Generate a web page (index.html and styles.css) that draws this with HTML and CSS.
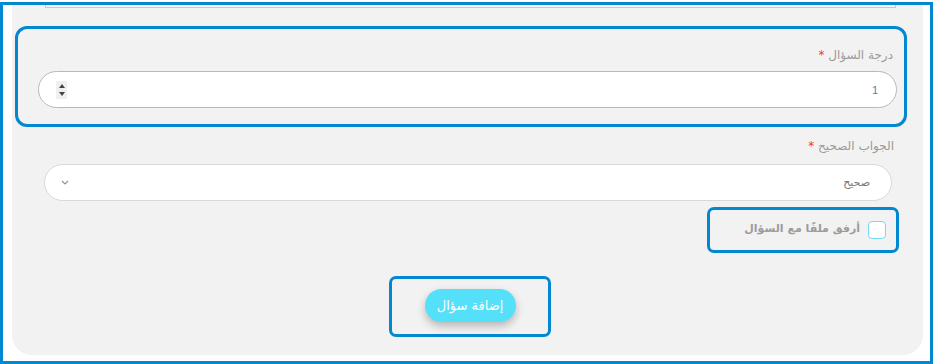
FILE: index.html
```html
<!DOCTYPE html>
<html lang="ar" dir="rtl">
<head>
    <meta charset="UTF-8">
    <meta name="viewport" content="width=device-width, initial-scale=1.0">
    <title>إضافة سؤال</title>
    <link rel="stylesheet" href="styles.css">
</head>
<body>
    <div class="frame">
        <div class="panel">
            <!-- bottom of the question textarea -->
            <div class="textarea-end"></div>

            <!-- Question grade -->
            <div class="group group-grade highlight">
                <label class="field-label">درجة السؤال <span class="req">*</span></label>
                <div class="field field-number">
                    <span class="field-value">1</span>
                    <span class="spinner">
                        <span class="spin-up"></span>
                        <span class="spin-down"></span>
                    </span>
                </div>
            </div>

            <!-- Correct answer -->
            <div class="group group-answer">
                <label class="field-label">الجواب الصحيح <span class="req">*</span></label>
                <div class="field field-select">
                    <span class="field-value">صحيح</span>
                    <svg class="chevron" width="8" height="5" viewBox="0 0 8 5">
                        <path d="M1 1l3 3 3-3" fill="none" stroke="#8a93a6" stroke-width="1.1"/>
                    </svg>
                </div>
            </div>

            <!-- Attach file -->
            <div class="attach highlight">
                <span class="checkbox"></span>
                <span class="attach-label">أرفق ملفًا مع السؤال</span>
            </div>

            <!-- Submit -->
            <div class="submit-wrap highlight">
                <button class="btn-add">إضافة سؤال</button>
            </div>
        </div>
    </div>
</body>
</html>
```

FILE: styles.css
```css
/* General Reset */
html, body {
    margin: 0;
    padding: 0;
    background: #fff;
    font-family: 'DejaVu Sans', sans-serif;
}

* {
    box-sizing: border-box;
}

/* Outer frame */
.frame {
    margin-top: 2px;
    height: 362px;
    border: 3px solid #0288d1;
    padding: 0 7px 6px 9px;
    overflow: hidden;
}

.panel {
    background: #f2f2f2;
    height: 100%;
    border-radius: 0 0 20px 20px;
    display: flex;
    flex-direction: column;
}

.textarea-end {
    height: 3px;
    margin: 0 27px 0 33px;
    border: 1px solid #c8c8c8;
    border-top: none;
    background: #f7f7f7;
}

/* Highlight boxes */
.highlight {
    border: 3px solid #0288d1;
    border-radius: 7px;
}

/* Form groups */
.group {
    display: flex;
    flex-direction: column;
}

.group-grade {
    margin: 18px 16px 0 3px;
    padding: 16px 7px 16px 20px;
    border-radius: 12px;
    gap: 6px;
}

.group-grade .field-label {
    padding-right: 4px;
}

.group-answer {
    margin: 9px 31px 0 32px;
    gap: 8px;
}

.group-answer .field-label {
    margin-right: -2px;
}

.field-label {
    font-size: 12px;
    line-height: 20px;
    color: #9a9a9a;
}

.req {
    color: #f33;
}

.field {
    height: 37px;
    border-radius: 19px;
    background: #fff;
    display: flex;
    align-items: center;
    justify-content: space-between;
    font-size: 11px;
}

.field-number {
    border: 1px solid #b9b9b9;
    padding: 0 18px 0 17px;
}

.field-number .field-value {
    font-family: 'Liberation Sans', sans-serif;
    color: #4a7fc1;
}

.spinner {
    width: 11px;
    height: 18px;
    background: #f0f0f0;
    display: flex;
    flex-direction: column;
    align-items: center;
    justify-content: center;
    gap: 4px;
}

.spin-up {
    border-left: 3px solid transparent;
    border-right: 3px solid transparent;
    border-bottom: 4px solid #444;
}

.spin-down {
    border-left: 3px solid transparent;
    border-right: 3px solid transparent;
    border-top: 4px solid #444;
}

.field-select {
    border: 1px solid #d9d9d9;
    padding: 0 21px 0 16px;
}

.field-select .field-value {
    color: #777;
}

/* Attach checkbox */
.attach {
    align-self: flex-start;
    margin: 6px 24px 0 0;
    width: 192px;
    height: 46px;
    padding: 0 10px 0 0;
    display: flex;
    align-items: center;
    gap: 8px;
}

.checkbox {
    flex: none;
    width: 18px;
    height: 18px;
    border: 1px solid #6fdcf2;
    border-radius: 4px;
    background: #fff;
}

.attach-label {
    font-size: 11px;
    color: #9c9c9c;
    font-weight: bold;
    margin-top: -3px;
}

/* Submit */
.submit-wrap {
    align-self: center;
    margin: 23px 0 0 5px;
    width: 162px;
    height: 61px;
    display: flex;
    align-items: flex-start;
    justify-content: center;
    padding-top: 10px;
}

.btn-add {
    width: 91px;
    height: 33px;
    border: none;
    border-radius: 17px;
    background: #55e0fa;
    color: #fff;
    font-family: 'DejaVu Sans', sans-serif;
    font-size: 13px;
    box-shadow: 0 4px 8px rgba(0, 0, 0, 0.25);
    cursor: pointer;
}
```
